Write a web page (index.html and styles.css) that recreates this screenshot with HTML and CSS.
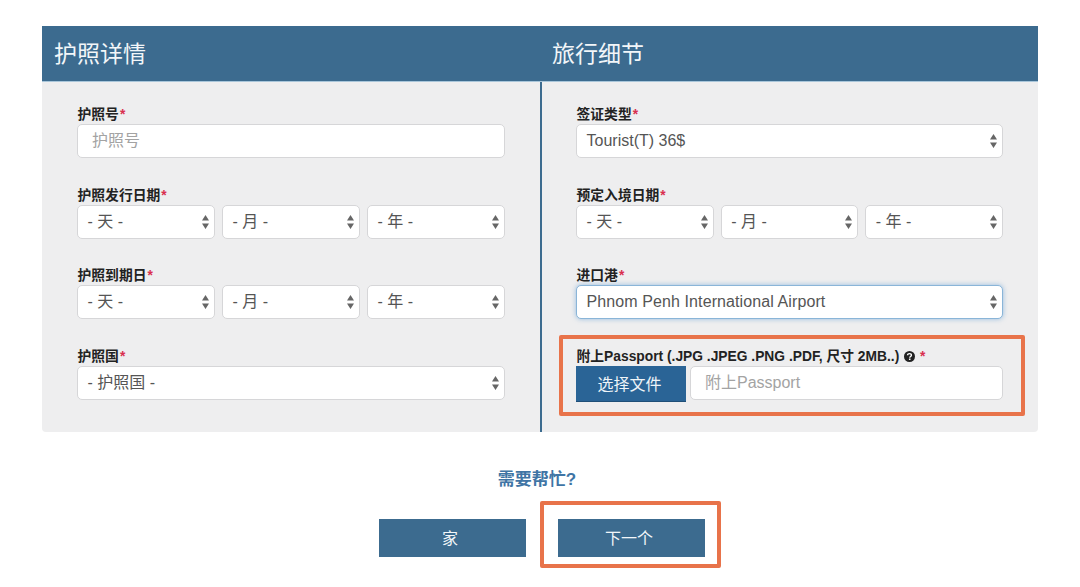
FILE: index.html
```html
<!DOCTYPE html>
<html lang="zh">
<head>
<meta charset="utf-8">
<title>护照详情</title>
<link rel="stylesheet" href="styles.css">
</head>
<body>
<svg class="defs" width="0" height="0"><symbol id="arrows" viewBox="0 0 7 14"><path d="M3.500 0 7 5.500H0ZM3.500 14 0 8.500H7Z"/></symbol></svg>
<main class="page">
  <form class="card">
    <section class="col col-left">
      <h2 class="head head-left">护照详情</h2>
      <div class="body body-left">
        <div class="field"><label class="lbl">护照号<b class="req">*</b></label><input class="ctl ph-input" placeholder="护照号"></div>
        <div class="field"><label class="lbl">护照发行日期<b class="req">*</b></label>
          <div class="dates">
            <div class="ctl sel"><span class="cjk">- 天 -</span><svg class="arr"><use href="#arrows"/></svg></div>
            <div class="ctl sel"><span class="cjk">- 月 -</span><svg class="arr"><use href="#arrows"/></svg></div>
            <div class="ctl sel"><span class="cjk">- 年 -</span><svg class="arr"><use href="#arrows"/></svg></div>
          </div></div>
        <div class="field"><label class="lbl">护照到期日<b class="req">*</b></label>
          <div class="dates">
            <div class="ctl sel"><span class="cjk">- 天 -</span><svg class="arr"><use href="#arrows"/></svg></div>
            <div class="ctl sel"><span class="cjk">- 月 -</span><svg class="arr"><use href="#arrows"/></svg></div>
            <div class="ctl sel"><span class="cjk">- 年 -</span><svg class="arr"><use href="#arrows"/></svg></div>
          </div></div>
        <div class="field"><label class="lbl">护照国<b class="req">*</b></label>
          <div class="ctl sel"><span class="cjk">- 护照国 -</span><svg class="arr"><use href="#arrows"/></svg></div></div>
      </div>
    </section>
    <section class="col col-right">
      <h2 class="head head-right">旅行细节</h2>
      <div class="body body-right">
        <div class="field"><label class="lbl">签证类型<b class="req">*</b></label>
          <div class="ctl sel"><span>Tourist(T) 36$</span><svg class="arr"><use href="#arrows"/></svg></div></div>
        <div class="field"><label class="lbl">预定入境日期<b class="req">*</b></label>
          <div class="dates">
            <div class="ctl sel"><span class="cjk">- 天 -</span><svg class="arr"><use href="#arrows"/></svg></div>
            <div class="ctl sel"><span class="cjk">- 月 -</span><svg class="arr"><use href="#arrows"/></svg></div>
            <div class="ctl sel"><span class="cjk">- 年 -</span><svg class="arr"><use href="#arrows"/></svg></div>
          </div></div>
        <div class="field"><label class="lbl">进口港<b class="req">*</b></label>
          <div class="ctl sel focus"><span>Phnom Penh International Airport</span><svg class="arr"><use href="#arrows"/></svg></div></div>
        <div class="field upload"><label class="lbl">附上Passport (.JPG .JPEG .PNG .PDF, 尺寸 2MB..)
            <svg class="help" viewBox="0 0 12 12"><circle cx="6" cy="6" r="6" fill="#222"/><path d="M3.900 4.700C3.900 3.500 4.800 2.800 6 2.800 7.200 2.800 8.100 3.500 8.100 4.600 8.100 6 6.300 6 6.300 7.300" fill="none" stroke="#fff" stroke-width="1.500"/><rect x="5.400" y="8.200" width="1.700" height="1.600" fill="#fff"/></svg>
            <b class="req">*</b></label>
          <div class="file-row"><button type="button" class="file-btn">选择文件</button><input class="ctl ph-input file-input" placeholder="附上Passport"></div>
        </div>
      </div>
    </section>
  </form>
  <a class="help-link">需要帮忙?</a>
  <div class="actions">
    <button type="button" class="btn btn-home">家</button>
    <div class="btn-frame"><button type="button" class="btn">下一个</button></div>
  </div>
</main>
</body>
</html>
```
FILE: styles.css
```css
*, *::before, *::after { box-sizing: border-box; }
html, body { margin: 0; height: 587px; overflow: hidden; background: #fff; }
body { font-family: "Liberation Sans", "Noto Sans CJK SC", sans-serif; color: #222; }
.defs { position: absolute; }
.page { padding: 26px 42px 0; }
.card { display: grid; grid-template-columns: 498px 498px; width: 996px; height: 406px; background: #eeeeef; border-radius: 0 0 4px 4px; }
.col { display: flex; flex-direction: column; min-width: 0; }
.head { margin: 0; height: 56px; background: #3c6b8f; border-bottom: 1px solid #a9c6da; color: #f2f6f9; font: 400 23px/53px "Noto Sans CJK SC", sans-serif; }
.head-left { padding-left: 12px; }
.head-right { padding-left: 12px; }
.body { flex: 1; padding-top: 22px; }
.body-left { padding-left: 35px; padding-right: 35px; }
.body-right { border-left: 2px solid #3c6b8f; padding-left: 34px; padding-right: 35px; }
.field { margin-bottom: 26.700px; position: relative; }
.lbl { display: block; height: 20px; padding-left: .5px; font-weight: 700; font-size: 13.800px; line-height: 21px; color: #222; white-space: nowrap; }
.req { color: #d9304f; margin-left: 1px; }
.ctl { display: block; width: 100%; height: 34px; background: #fff; border: 1px solid #d6d6d8; border-radius: 5px; font-family: "Liberation Sans", "Noto Sans CJK SC", sans-serif; font-size: 16px; color: #555; }
.ph-input { padding: 0 14px; outline: none; font-size: 16px; }
.ph-input::placeholder { color: #a3a3a3; opacity: 1; }
.sel { display: flex; align-items: center; justify-content: space-between; padding: 0 5px 0 9.500px; white-space: nowrap; }
.cjk { padding-bottom: 4px; }
.arr { width: 7px; height: 14px; fill: #666; flex: none; }
.dates { display: grid; grid-template-columns: repeat(3, 1fr); gap: 7px; }
.focus { border-color: #8ab5d8; box-shadow: 0 0 5px rgba(102, 160, 214, .65); letter-spacing: .1px; }
.upload::after { content: ""; position: absolute; left: -17px; right: -22px; top: -11px; height: 81px; border: 4px solid #e8734a; border-radius: 2px; pointer-events: none; }
.help { width: 11px; height: 11px; vertical-align: -1px; margin-left: 1px; }
.file-row { display: flex; align-items: flex-start; gap: 4px; }
.file-btn { flex: none; width: 110px; height: 36px; border: 0; border-bottom: 1px solid #1f4f78; background: #2a6496; color: #eef4f8; font: 400 16px "Noto Sans CJK SC", sans-serif; padding: 0 3px 2px 0; }
.file-input { flex: 1; width: auto; min-width: 0; }
.help-link { display: block; margin-top: 36px; width: 990px; text-align: center; height: 23px; font: 700 17px/23px "Liberation Sans", "Noto Sans CJK SC", sans-serif; color: #3f75a5; }
.actions { display: flex; align-items: flex-start; margin-top: 10px; margin-left: 337px; gap: 14px; }
.btn { display: block; width: 147px; height: 38px; border: 0; background: #3c6b8f; color: #f2f6f9; font: 400 16px "Noto Sans CJK SC", sans-serif; padding: 0 5px 2px 0; }
.btn-home { margin-top: 18px; }
.btn-frame { padding: 14px; border: 4px solid #e8734a; border-radius: 2px; height: 67px; width: 181px; }
```
